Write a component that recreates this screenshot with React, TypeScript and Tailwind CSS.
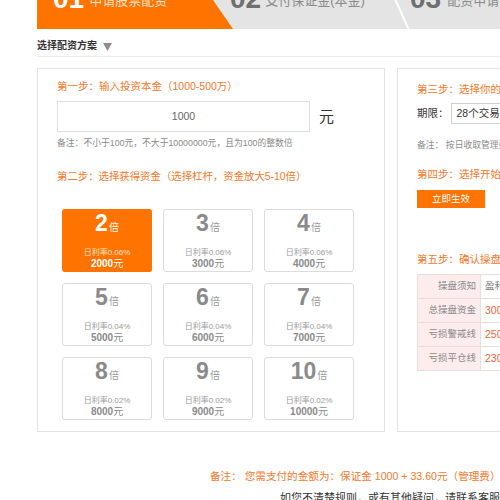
import React from 'react';

const cards = [
  { n: '2', rate: '0.06%', amt: '2000', active: true },
  { n: '3', rate: '0.06%', amt: '3000' },
  { n: '4', rate: '0.06%', amt: '4000' },
  { n: '5', rate: '0.04%', amt: '5000' },
  { n: '6', rate: '0.04%', amt: '6000' },
  { n: '7', rate: '0.04%', amt: '7000' },
  { n: '8', rate: '0.02%', amt: '8000' },
  { n: '9', rate: '0.02%', amt: '9000' },
  { n: '10', rate: '0.02%', amt: '10000' },
];

const rows = [
  { label: '操盘须知', value: '盈利全归你，亏损由你承担', plain: true },
  { label: '总操盘资金', value: '3000元' },
  { label: '亏损警戒线', value: '2500元' },
  { label: '亏损平仓线', value: '2300元' },
];

export default function App() {
  return (
    <div className="w-[500px] h-[500px] overflow-hidden bg-white font-['Liberation_Sans','Noto_Sans_CJK_SC',sans-serif]">
      <div className="w-[1000px] pl-[37px]">
        {/* Steps bar */}
        <div className="relative h-[29px] flex bg-[#e4e4e4] overflow-hidden">
          <div className="w-[196px] shrink-0 bg-[#ff7300] flex items-start pl-[16px] [clip-path:polygon(0_0,176px_0,100%_100%,0_100%)]">
            <span className="text-[28px] font-bold leading-none text-white -mt-[15px]">01</span>
            <span className="text-[13px] leading-[13px] text-[#ffe3cc] -mt-[6px] ml-[5px]">申请股票配资</span>
          </div>
          <div className="w-[170px] shrink-0 flex items-start -ml-[3px]">
            <span className="text-[28px] font-bold leading-none text-[#6f6f6f] -mt-[15px]">02</span>
            <span className="text-[13px] leading-[13px] text-[#8a8a8a] -mt-[6px] ml-[4px]">支付保证金(本金)</span>
          </div>
          <div className="flex items-start ml-[10px]">
            <span className="text-[28px] font-bold leading-none text-[#6f6f6f] -mt-[15px]">03</span>
            <span className="text-[13px] leading-[13px] text-[#8a8a8a] -mt-[6px] ml-[6px]">配资申请</span>
          </div>
          <svg className="absolute left-0 top-0" width="400" height="29">
            <line x1="358" y1="-1" x2="372" y2="30" stroke="#ffffff" strokeWidth="2" />
          </svg>
        </div>

        {/* Title */}
        <div className="h-[28px] flex items-end pb-[3px] border-b border-[#ececec]">
          <span className="text-[10px] leading-[14px] font-bold text-[#333]">选择配资方案</span>
          <svg className="ml-[6px] mb-[2px]" width="9" height="8" viewBox="0 0 9 8">
            <polygon points="0,0 9,0 4.5,8" fill="#8d8d8d" />
          </svg>
        </div>

        {/* Panels */}
        <div className="flex gap-[12px] mt-[11px]">
          {/* Left panel */}
          <div className="w-[348px] h-[364px] shrink-0 border border-[#e2e2e2] pl-[19px] pt-[10px]">
            <div className="text-[10.5px] leading-[14px] text-[#f5782a]">第一步：输入投资本金（1000-500万）</div>
            <div className="flex items-center mt-[8px]">
              <div className="w-[253px] h-[31px] border border-[#dedede] flex items-center justify-center text-[10.5px] text-[#666]">
                1000
              </div>
              <span className="ml-[9px] text-[15px] text-[#333] leading-none">元</span>
            </div>
            <div className="mt-[5px] text-[8.8px] leading-[12px] text-[#8a8a8a]">备注：不小于100元，不大于10000000元，且为100的整数倍</div>
            <div className="mt-[21px] text-[10.4px] leading-[14px] text-[#f5782a]">第二步：选择获得资金（选择杠杆，资金放大5-10倍）</div>
            <div className="mt-[25px] ml-[5px] grid grid-cols-[90px_90px_90px] gap-x-[11px] gap-y-[11px]">
              {cards.map((c) => (
                <div
                  key={c.n}
                  className={
                    c.active
                      ? 'h-[63px] rounded-[3px] bg-[#ff7300] flex flex-col items-center pt-[3px] text-white'
                      : 'h-[63px] rounded-[3px] bg-white border border-[#dcdcdc] flex flex-col items-center pt-[2px] text-[#8a8a8a]'
                  }
                >
                  <div className="flex items-baseline">
                    <span className="text-[23px] font-bold leading-[23px]">{c.n}</span>
                    <span className={c.active ? 'text-[10px] ml-[1px] text-white' : 'text-[10px] ml-[1px] text-[#9a9a9a]'}>倍</span>
                  </div>
                  <div className={c.active ? 'mt-[13px] text-[8px] leading-[10px] text-[#ffe6d2]' : 'mt-[13px] text-[8px] leading-[10px] text-[#9a9a9a]'}>
                    日利率{c.rate}
                  </div>
                  <div className="text-[10px] leading-[12px] font-bold">
                    {c.amt}<span className="font-normal">元</span>
                  </div>
                </div>
              ))}
            </div>
          </div>

          {/* Right panel */}
          <div className="w-[340px] h-[364px] shrink-0 border border-[#e2e2e2] pl-[19px] pt-[13px]">
            <div className="text-[10.5px] leading-[14px] text-[#f5782a]">第三步：选择你的操盘期限</div>
            <div className="flex items-center mt-[7px]">
              <span className="text-[10.5px] text-[#333]">期限：</span>
              <div className="ml-[2px] w-[160px] h-[21px] border border-[#cfcfcf] flex items-center pl-[5px] text-[10.5px] text-[#333]">
                28个交易日
              </div>
            </div>
            <div className="mt-[15px] text-[8.8px] leading-[12px] text-[#8a8a8a]">备注： 按日收取管理费，节假日不收费</div>
            <div className="mt-[16px] text-[10.5px] leading-[14px] text-[#f5782a]">第四步：选择开始交易时间</div>
            <div className="mt-[9px] w-[68px] h-[18px] bg-[#ff7300] flex items-center justify-center text-[9.5px] text-white">
              立即生效
            </div>
            <div className="mt-[44px] text-[10.5px] leading-[14px] text-[#f5782a]">第五步：确认操盘信息</div>
            <div className="mt-[8px] w-[300px] border-t border-l border-[#efdcdc]">
              {rows.map((r) => (
                <div key={r.label} className="flex h-[24px] border-b border-[#efdcdc]">
                  <div className="w-[63px] shrink-0 bg-[#fcecec] border-r border-[#efdcdc] flex items-center justify-end pr-[4px] text-[9.5px] text-[#8a8a8a]">
                    {r.label}
                  </div>
                  <div className={r.plain ? 'flex items-center pl-[4px] text-[9.5px] text-[#777]' : 'flex items-center pl-[4px] text-[10.5px] text-[#f2663a]'}>
                    {r.value}
                  </div>
                </div>
              ))}
            </div>
          </div>
        </div>

        {/* Footer */}
        <div className="mt-[38px] ml-[173px] text-[10.6px] leading-[13px] text-[#f5782a] whitespace-nowrap">
          备注： 您需支付的金额为：保证金 1000 + 33.60元（管理费） = 1033.60元
        </div>
        <div className="mt-[8px] ml-[243px] text-[11px] leading-[14px] text-[#333] whitespace-nowrap">
          如您不清楚规则，或有其他疑问，请联系客服
        </div>
      </div>
    </div>
  );
}
